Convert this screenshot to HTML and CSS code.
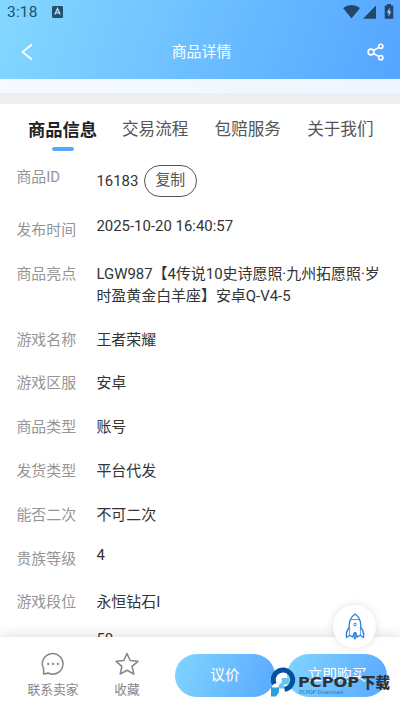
FILE: index.html
```html
<!DOCTYPE html>
<html lang="zh-CN">
<head>
<meta charset="utf-8">
<meta name="viewport" content="width=device-width, initial-scale=1">
<title>商品详情</title>
<link rel="stylesheet" href="styles.css">
</head>
<body>
<div class="screen">
  <header class="header">
    <div class="status">
      <span class="time">3:18</span>
      <svg class="app-badge" width="11" height="12" viewBox="0 0 11 12"><rect width="11" height="12" rx="1.2" fill="#23506f"/><path d="M2.8 8.6 5.5 2.6 8.2 8.6M3.8 6.8h3.4" fill="none" stroke="#b5e2fb" stroke-width="1.3"/></svg>
      <svg class="system" width="52" height="16" viewBox="0 0 52 16" fill="#23476a"><path d="M0 4Q8.500-1.800 17 4L8.500 14.400Z"/><path d="M33 1.500V14.700H20Z"/><path d="M44 0h4v1.500h1.500q.8 0 .8.800v11.600q0 .8-.8.800h-7q-.8 0-.8-.8V2.300q0-.8.800-.8H44z"/><path d="M46.700 3.800 43.700 8.700h1.800v3.800l2.900-5h-1.700z" fill="#8fc5ff"/></svg>
    </div>
    <div class="navbar">
      <svg width="12" height="18" viewBox="0 0 12 18"><path d="M11 1.500 1.500 9 11 16.500" fill="none" stroke="#fff" stroke-width="1.700"/></svg>
      <h1 class="title">商品详情</h1>
      <svg width="18" height="18" viewBox="0 0 18 18" fill="none" stroke="#fff" stroke-width="1.600"><circle cx="4" cy="9" r="2.900"/><circle cx="13.800" cy="3.300" r="2.100"/><circle cx="13.800" cy="14.700" r="2.100"/><path d="M6.500 7.500 12 4.400M6.500 10.500l5.500 3.100"/></svg>
    </div>
  </header>
  <div class="strip"></div>
  <div class="divider"></div>
  <main class="content">
    <nav class="tabs">
      <span class="tab active">商品信息</span>
      <span class="tab">交易流程</span>
      <span class="tab">包赔服务</span>
      <span class="tab">关于我们</span>
    </nav>
    <dl class="info">
      <div class="row row-id"><dt>商品ID</dt><dd>16183<button class="copy">复制</button></dd></div>
      <div class="row latin"><dt>发布时间</dt><dd>2025-10-20 16:40:57</dd></div>
      <div class="row"><dt>商品亮点</dt><dd>LGW987【4传说10史诗愿照·九州拓愿照·岁<br>时盈黄金白羊座】安卓Q-V4-5</dd></div>
      <div class="row"><dt>游戏名称</dt><dd>王者荣耀</dd></div>
      <div class="row"><dt>游戏区服</dt><dd>安卓</dd></div>
      <div class="row"><dt>商品类型</dt><dd>账号</dd></div>
      <div class="row"><dt>发货类型</dt><dd>平台代发</dd></div>
      <div class="row"><dt>能否二次</dt><dd>不可二次</dd></div>
      <div class="row latin"><dt>贵族等级</dt><dd>4</dd></div>
      <div class="row"><dt>游戏段位</dt><dd>永恒钻石I</dd></div>
      <div class="row latin last"><dt></dt><dd>50</dd></div>
    </dl>
  </main>
  <footer class="footer">
    <div class="action contact">
      <svg width="24" height="24" viewBox="0 0 24 24" fill="none" stroke="#888" stroke-width="1.500"><path d="M2.600 21.900V16.700A10.300 10.300 0 1 1 7 21Q5.200 21.900 2.600 21.900Z" stroke-linejoin="round"/><g fill="#888" stroke="none"><circle cx="7.200" cy="12" r="1.150"/><circle cx="12" cy="12" r="1.150"/><circle cx="16.800" cy="12" r="1.150"/></g></svg>
      <span>联系卖家</span>
    </div>
    <div class="action fav">
      <svg width="24" height="24" viewBox="0 0 24 24"><path d="m12 1.500 3.200 7 7.700.8-5.800 5.100 1.700 7.700L12 18.300l-6.800 3.800 1.700-7.700L1.100 9.300l7.700-.8z" fill="none" stroke="#888" stroke-width="1.600" stroke-linejoin="round"/></svg>
      <span>收藏</span>
    </div>
    <button class="primary">议价</button>
    <button class="primary">立即购买</button>
  </footer>
  <div class="rocket">
    <svg width="20" height="27" viewBox="0 0 20 27" fill="none" stroke="#2780e3" stroke-width="1.300" stroke-linejoin="round"><path d="M10 1C6 4 4.200 8 4.200 12.500v2C1.800 17 .8 20 1.500 24.500l3.200-2.300 2.800 1.800L8.800 21h2.400l1.300 3 2.800-1.800 3.200 2.300c.7-4.500-.3-7.500-2.700-10v-2C15.800 8 14 4 10 1Z"/><circle cx="10" cy="11.500" r="1.300" stroke-width="1"/><path d="M6.200 6.500h7.600M4.600 14v8M15.400 14v8" stroke-width=".8"/><path d="M9 19.500h2v5.500l-1 1.300-1-1.300z" fill="#62a7ef" stroke-width="1"/></svg>
  </div>
  <svg class="watermark" width="124" height="34" viewBox="0 0 124 34">
    <path d="M3.300 17A9.700 9.700 0 1 1 13.500 22.300" fill="none" stroke="#07509b" stroke-width="5"/>
    <path d="M10.500 11h7.500v6.500h-5V21.500H7.500v-5.500h3z" fill="#68c4ee"/>
    <path d="M0 20h8v5L5 29.500H0z" fill="#2f9fda"/>
    <path d="M10 11v4L7 18v2H1" fill="none" stroke="#eef9ff" stroke-width="1.200"/>
    <text class="brand" x="27" y="20.300" textLength="61" lengthAdjust="spacingAndGlyphs">PCPOP</text>
    <text class="brand-cn" x="90" y="21" textLength="29" lengthAdjust="spacingAndGlyphs">下载</text>
    <text class="brand-sub" x="28" y="27.200" textLength="44" lengthAdjust="spacingAndGlyphs">PCPOP Download</text>
  </svg>
</div>
</body>
</html>
```
FILE: styles.css
```css
* { box-sizing: border-box; }
body {
  margin: 0;
  background: #fff;
  font-family: Roboto, "Noto Sans CJK SC", sans-serif;
}
button { font: inherit; }
.screen {
  position: relative;
  display: flex;
  flex-direction: column;
  width: 400px;
  height: 711px;
  overflow: hidden;
}
.header {
  flex: none;
  height: 79px;
  background: linear-gradient(110deg, #84d8ff 0%, #6bbeff 52%, #55a5ff 100%);
}
.status {
  display: flex;
  align-items: center;
  height: 24px;
  padding: 0 5px 0 7px;
}
.time {
  width: 45px;
  font-size: 15.5px;
  letter-spacing: .2px;
  line-height: 22px;
  color: #24506c;
}
.system { margin-left: auto; }
.navbar {
  display: flex;
  align-items: center;
  justify-content: space-between;
  height: 55px;
  padding: 0 15px 0 21px;
}
.title {
  margin: 0 0 0 3px;
  padding-bottom: 3px;
  font-size: 14.9px;
  font-weight: 400;
  color: #fff;
}
.strip { flex: none; height: 14px; background: linear-gradient(90deg, #f5faff, #edf6ff); }
.divider { flex: none; height: 11px; background: #eee; }
.content { flex: 1; min-height: 0; overflow: hidden; }
.tabs {
  display: flex;
  gap: 26px;
  height: 62px;
  padding: 14px 0 0 28px;
}
.tab {
  flex: none;
  width: 66.6px;
  font-size: 16.6px;
  line-height: 24px;
  color: #555;
  white-space: nowrap;
}
.tab.active {
  width: 69px;
  margin-right: -1px;
  font-size: 17.3px;
  font-weight: 700;
  color: #222;
}
.active::after {
  content: "";
  display: block;
  width: 22px;
  height: 4px;
  margin: 5px auto 0;
  border-radius: 2px;
  background: #57a7fb;
}
.info { margin: 0; padding: 0 0 0 16.4px; }
.row {
  display: grid;
  grid-template-columns: 80px 300px;
  padding-bottom: 21.8px;
  font-size: 14.95px;
  line-height: 22px;
}
.row dt { color: #959595; }
.row dd { margin: 0; color: #333; white-space: nowrap; }
.row.latin dd { margin-top: -4px; }
.row.last dd { margin-top: -7px; }
.row-id { padding-bottom: 22px; }
.row-id dd {
  display: flex;
  align-items: center;
  height: 31px;
  margin-top: -1px;
  margin-bottom: 1px;
}
.copy {
  width: 53px;
  height: 32px;
  margin-left: 5.5px;
  padding: 0 0 1px;
  border: 1px solid #555;
  border-radius: 16px;
  background: #fff;
  color: #555;
  line-height: 28px;
}
.footer {
  flex: none;
  display: flex;
  height: 74px;
  padding: 15px 0 0 20px;
  background: #fff;
  box-shadow: 0 -2px 12px rgba(0, 0, 0, .12);
  position: relative;
}
.action {
  display: flex;
  flex-direction: column;
  align-items: center;
  gap: 4px;
  font-size: 12.8px;
  line-height: 20px;
  color: #888;
}
.contact { width: 66px; }
.fav { width: 82px; }
.primary {
  width: 100px;
  height: 43px;
  margin: 2px 0 0 7px;
  padding: 0 0 4px;
  border: 0;
  border-radius: 22px;
  background: linear-gradient(110deg, #80d5ff, #58a8ff);
  color: #fff;
  font-size: 14.8px;
}
.primary + .primary { margin-left: 12px; }
.rocket {
  position: absolute;
  left: 333px;
  top: 605px;
  display: flex;
  align-items: center;
  justify-content: center;
  width: 43px;
  height: 43px;
  border-radius: 50%;
  background: #fff;
  box-shadow: 0 0 10px rgba(0, 0, 0, .12);
}
.watermark { position: absolute; left: 271px; top: 667px; }
.brand {
  font: 700 13.5px "DejaVu Sans", sans-serif;
  fill: #303335;
}
.brand-cn { font: 900 14.5px "Noto Sans CJK SC", sans-serif; fill: #303335; }
.brand-sub { font: 5px "DejaVu Sans", sans-serif; fill: #286a9b; }
```
